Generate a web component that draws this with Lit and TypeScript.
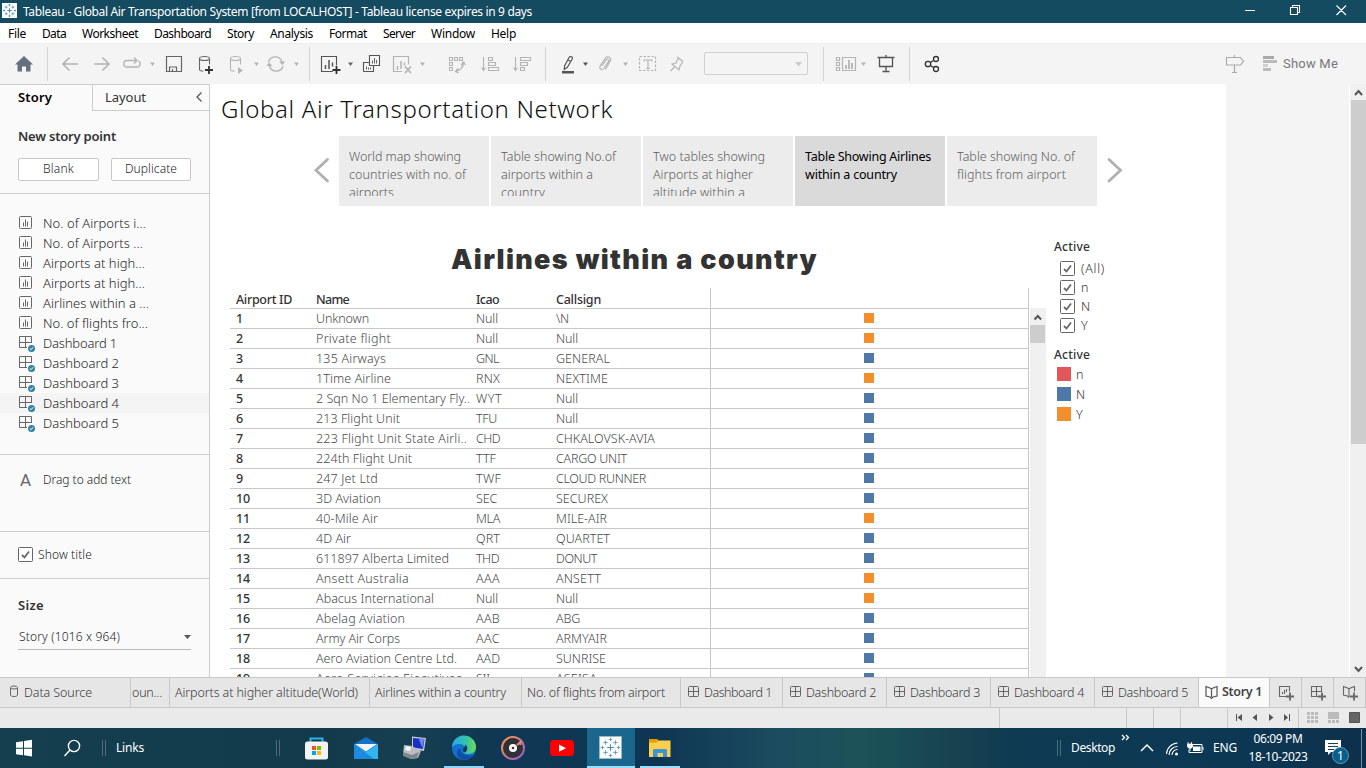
import { LitElement, html, svg, css, nothing } from "lit";
import { customElement } from "lit/decorators.js";

/** Text run that is tracked to a given advance width. */
const t = (text: string, w: number, cls = "") => html`<span class="t ${cls}" data-w=${w}>${text}</span>`;

/** Icon slot: a strip of a bar whose drawing uses the bar's own coordinates. */
const slot = (x: number, y: number, w: number, h: number, body: unknown) =>
  html`<svg class="slot" width=${w} height=${h} viewBox="${x} ${y} ${w} ${h}">${body}</svg>`;
const tool = (x: number, w: number, body: unknown) => slot(x, 43, w, 41, body);
const task = (x: number, w: number, body: unknown) => slot(x, 728, w, 40, body);
const caret = (x: number, fill = "#999", y = 62.5) => svg`<path d="M${x} ${y}h5l-2.5 3.5z" fill=${fill} />`;
const divider = (x: number) => svg`<path d="M${x + 0.5} 47v34" stroke="#d4d4d4" fill="none" />`;

const sparks = (cx: number, cy: number, s: number, c: string) => {
  const plus = (x: number, y: number, r: number, o = 0.75) => svg`<path d="M${cx + (x - r) * s} ${cy + y * s}h${2 * r * s}M${cx + x * s} ${cy + (y - r) * s}v${2 * r * s}" stroke=${c} stroke-opacity=${o} stroke-width=${Math.max(s * 0.85, 0.9)} fill="none" />`;
  return svg`${plus(0, 0, 2.8, 1)}${plus(0, -7, 1.5)}${plus(0, 7, 1.5)}${plus(-7, 0, 1.5)}${plus(7, 0, 1.5)}
    ${plus(-4.3, -4.3, 1.9)}${plus(4.3, -4.3, 1.9)}${plus(-4.3, 4.3, 1.9)}${plus(4.3, 4.3, 1.9)}`;
};

const menus: [string, number][] = [["File", 18], ["Data", 24], ["Worksheet", 56], ["Dashboard", 57], ["Story", 27], ["Analysis", 43], ["Format", 38], ["Server", 32], ["Window", 44], ["Help", 25]];
const sheets: [string, number][] = [["No. of Airports i...", 103], ["No. of Airports ...", 100], ["Airports at high...", 102], ["Airports at high...", 102], ["Airlines within a ...", 106], ["No. of flights fro...", 105]];
const cards: [string, number][][] = [
  [["World map showing", 112], ["countries with no. of", 117], ["airports", 45]],
  [["Table showing No.of", 115], ["airports within a", 92], ["country", 44]],
  [["Two tables showing", 112], ["Airports at higher", 100], ["altitude within a", 92]],
  [["Table Showing Airlines", 126], ["within a country", 92]],
  [["Table showing No. of", 118], ["flights from airport", 109]],
];
type Row = [string, number, string, number, string, number, string];
const rows: Row[] = [
  ["Unknown", 53, "Null", 22, "\\N", 13, "Y"],
  ["Private flight", 75, "Null", 22, "Null", 22, "Y"],
  ["135 Airways", 70, "GNL", 23, "GENERAL", 54, "N"],
  ["1Time Airline", 75, "RNX", 24, "NEXTIME", 52, "Y"],
  ["2 Sqn No 1 Elementary Fly..", 154, "WYT", 26, "Null", 22, "N"],
  ["213 Flight Unit", 84, "TFU", 21, "Null", 22, "N"],
  ["223 Flight Unit State Airli..", 151, "CHD", 24, "CHKALOVSK-AVIA", 99, "N"],
  ["224th Flight Unit", 96, "TTF", 20, "CARGO UNIT", 71, "N"],
  ["247 Jet Ltd", 62, "TWF", 25, "CLOUD RUNNER", 90, "N"],
  ["3D Aviation", 65, "SEC", 21, "SECUREX", 52, "N"],
  ["40-Mile Air", 62, "MLA", 24, "MILE-AIR", 51, "Y"],
  ["4D Air", 35, "QRT", 24, "QUARTET", 54, "N"],
  ["611897 Alberta Limited", 133, "THD", 23, "DONUT", 41, "N"],
  ["Ansett Australia", 93, "AAA", 24, "ANSETT", 45, "Y"],
  ["Abacus International", 118, "Null", 22, "Null", 22, "Y"],
  ["Abelag Aviation", 89, "AAB", 24, "ABG", 24, "N"],
  ["Army Air Corps", 84, "AAC", 24, "ARMYAIR", 51, "N"],
  ["Aero Aviation Centre Ltd.", 141, "AAD", 24, "SUNRISE", 50, "N"],
  ["Aero Servicios Ejecutivos..", 153, "SII", 14, "ASEISA", 41, "N"],
];

const sheetIcon = html`<svg width="18" height="18" viewBox="0 0 18 18" fill="none" stroke="#666"><rect x="1.500" y="2.500" width="12" height="12" rx="1" /><path d="M5.500 8.500v4M7.500 5.500v7M9.500 7.500v5" /></svg>`;
const dashIcon = html`<svg width="18" height="18" viewBox="0 0 18 18" fill="none" stroke="#666"><path d="M13.500 9V2.500H1.500V13.500H9M1.500 8.500H13.500M7.500 2.500V13.500" /><circle cx="13.500" cy="14.500" r="3.500" fill="#37809f" stroke="none" /><path d="M11.800 14.500l1.300 1.200 2-2.400" stroke="#fff" /></svg>`;
const check = html`<svg class="check" width="15" height="15" viewBox="0 0 15 15" fill="none" stroke="#666"><rect x=".5" y=".5" width="14" height="14" rx="1" fill="#fff" /><path d="M4 8l2.500 2.500L11 4.500" stroke-width="1.800" /></svg>`;
const gridIcon = html`<svg class="tabico" width="12" height="12" viewBox="0 0 12 12" fill="none" stroke="#666"><rect x=".5" y=".5" width="10" height="10" rx="1" /><path d="M5.500 .5v10M.5 5.500h10" /></svg>`;

@customElement("app-root")
export class AppRoot extends LitElement {
  static styles = css`
    :host { display: block; width: 1366px; height: 768px; overflow: hidden; background: #f4f4f4; font: 12px "Noto Sans", sans-serif; color: #333; }
    * { box-sizing: border-box; }
    svg { display: block; flex: none; }
    .t { white-space: pre; display: inline-block; }
    .page { display: flex; flex-direction: column; height: 768px; }
    .bar { display: flex; flex: none; }
    .titlebar { height: 23px; background: #154b60; color: #fff; line-height: 24px; align-items: stretch; }
    .titlebar .name { flex: 1; font-size: 12px; padding-left: 1px; }
    .menu { height: 20px; background: #fff; color: #000; line-height: 21px; padding-left: 8px; gap: 16px; }
    .toolbar { height: 41px; background: #f4f4f4; border-top: 1px solid #eee; }
    .toolbar .slot { margin-top: -1px; }
    .showme { font-size: 13px; color: #777; line-height: 40px; font-family: Roboto, sans-serif; }
    .grow { flex: 1; }
    .work { height: 593px; }
    .side { width: 210px; background: #fafafa; border-right: 1px solid #ccc; border-top: 1px solid #ccc; flex: none; display: flex; flex-direction: column; color: #1e1e1e; font-weight: 300; }
    .sec { border-bottom: 1px solid #ccc; flex: none; }
    .tabs2 { display: flex; height: 26px; line-height: 25px; font-size: 13px; }
    .tabs2 .on { width: 92px; padding-left: 18px; font-weight: 600; color: #000; }
    .tabs2 .off { flex: 1; display: flex; border-left: 1px solid #ccc; border-bottom: 1px solid #ccc; padding-left: 12px; justify-content: space-between; color: #333; font-weight: 400; }
    .new { height: 83px; padding: 15px 0 0 18px; }
    .new h4, .size h4 { margin: 0; font-size: 13px; font-weight: 600; color: #333; line-height: 21px; height: 21px; }
    .btns { display: flex; gap: 12px; padding-top: 11px; }
    .btn { width: 81px; height: 23px; border: 1px solid #c8c8c8; border-radius: 2px; background: #fff; text-align: center; line-height: 20px; }
    .btn + .btn { width: 80px; }
    .list { height: 261px; padding-top: 19px; font-size: 13px; }
    .li { display: flex; height: 20px; padding-left: 18px; align-items: center; gap: 7px; line-height: 20px; }
    .li.hl { background: #f4f4f4; }
    .drag { height: 77px; padding: 14px 0 0 20px; display: flex; gap: 12px; line-height: 22px; }
    .drag .a { font: 17px/22px Roboto, sans-serif; color: #666; width: 11px; }
    .show { height: 47px; display: flex; align-items: center; padding: 0 0 1px 18px; gap: 5px; }
    .size { padding: 16px 0 0 18px; }
    .dd { width: 173px; height: 24px; margin-top: 10px; border-bottom: 1px solid #bbb; display: flex; justify-content: space-between; line-height: 22px; padding-left: 1px; }
    .canvas { width: 1016px; background: #fff; flex: none; overflow: hidden; display: flex; flex-direction: column; }
    .h1 { height: 52px; padding-left: 11px; font-size: 24px; font-weight: 300; line-height: 50px; color: #111; flex: none; }
    .nav { display: flex; height: 70px; padding-left: 103px; flex: none; gap: 2px; }
    .card { width: 150px; height: 70px; background: #ececec; padding: 12px 0 0 10px; color: #606060; font-weight: 300; }
    .card .in { height: 48px; overflow: hidden; font-size: 12.500px; line-height: 18px; }
    .card .in .t { display: block; width: max-content; }
    .card.on { background: #dadada; color: #000; font-weight: 400; }
    .below { display: flex; flex: 1; min-height: 0; padding-left: 20px; }
    .sheet { width: 816px; flex: none; display: flex; flex-direction: column; }
    .h2 { height: 82px; padding: 34px 0 0 221px; font: 900 27px/40px Inter, sans-serif; color: #333; flex: none; }
    .tbl { display: flex; }
    .grid { width: 799px; flex: none; border-right: 1px solid #c8c8c8; font-size: 12.500px; color: #484848; font-weight: 300; }
    .row { display: grid; grid-template-columns: 80px 160px 80px 160px 1fr; height: 20px; border-bottom: 1px solid #c8c8c8; line-height: 20px; padding-left: 6px; }
    .row .mark { display: flex; justify-content: center; align-items: center; border-left: 1px solid #c8c8c8; height: 20px; margin-left: -6px; padding: 0 1px 2px 0; }
    .row.head, .row .id { font-weight: 500; color: #333; }
    .row.head { height: 21px; line-height: 23px; }
    .row.head .mark { height: 21px; }
    .sq { width: 10px; height: 10px; background: #4e79a7; }
    .sq.Y { background: #f28e2b; }
    .sq.n { background: #e15759; }
    .vs { width: 16px; margin: 20px 0 0 1px; background: #f0f0f0; display: flex; flex-direction: column; }
    .thumb { background: #cdcdcd; width: 15px; }
    .legend { padding: 32px 0 0 8px; color: #333; font-weight: 300; }
    .legend h5 { margin: 0; font: 500 12px/18px "Noto Sans", sans-serif; color: #333; height: 18px; }
    .legend .c { display: flex; gap: 6px; padding-left: 6px; height: 19px; align-items: center; font-size: 12.500px; }
    .legend .cs { padding: 3px 0 11px; }
    .legend .k { display: flex; gap: 5px; padding-left: 3px; height: 20px; align-items: center; font-size: 12.500px; }
    .legend .sq { width: 14px; height: 14px; }
    .scroll { width: 17px; background: #f0f0f0; display: flex; flex-direction: column; align-items: center; border-left: 1px solid #fff; }
    .scroll .thumb { height: 344px; }
    .tabs { height: 31px; background: #e6e6e6; border-top: 1px solid #c8c8c8; border-bottom: 1px solid #c8c8c8; font-size: 12.500px; color: #3c3c3c; line-height: 29px; font-weight: 300; }
    .tab { display: flex; border-right: 1px solid #c8c8c8; flex: none; overflow: hidden; padding-left: 6px; }
    .tab.ds { width: 131px; padding-left: 0; } .tab.w2 { width: 39px; padding-left: 1px; } .tab.w3 { width: 200px; padding-left: 5px; } .tab.w4 { width: 152px; padding-left: 5px; } .tab.w5 { width: 159px; padding-left: 5px; }
    .tab.d { width: 104px; padding-left: 7px; gap: 4px; } .tab.d1 { width: 102px; } .tab.st { width: 71px; background: #fafafa; color: #444; font-weight: 600; padding: 0; line-height: 28px; }
    .tab.p { width: 32px; padding: 0; }
    .tabico { margin-top: 8px; }
    .status { height: 20px; background: #eaeaea; }
    .taskbar { height: 40px; color: #fff; line-height: 40px; background: linear-gradient(90deg, #143f4e 0, #123a4a 24%, #163f51 30%, #0e3853 36%, #0e3654 48%, #1c4c60 57%, #1c5358 63%, #17434f 70%, #0e3b52 74%, #0c3854 90%, #0d304b 100%); }
    .clock { display: flex; flex-direction: column; width: 64px; line-height: 18px; padding-top: 2px; align-items: center; }
  `;

  updated() {
    this.renderRoot.querySelectorAll<HTMLElement>("[data-w]").forEach((el) => {
      el.style.letterSpacing = "0px";
      const n = (el.textContent ?? "").length;
      const range = document.createRange();
      range.selectNodeContents(el);
      el.style.letterSpacing = `${(Number(el.dataset.w) - range.getBoundingClientRect().width) / n}px`;
    });
  }

  private toolbar() {
    const g = "#b4b4b4";
    const d = "#555";
    return html`<div class="bar toolbar">
      ${tool(0, 53, svg`<path d="M24 56l-9 8.500h2.500v7h4.500v-5h4v5h4.500v-7h2.500z" fill="#66707c" />${divider(47)}`)}
      ${tool(53, 107, svg`<g fill="none" stroke=${g} stroke-width="1.600"><path d="M78 64H63M69.500 57.500L63 64l6.500 6.500M94 64h15M102.500 57.500l6.500 6.500-6.500 6.500" /><path d="M132 60.500h-5a3.200 3.200 0 0 0 0 6.500h10a3.200 3.200 0 0 0 1.500-6M130 60.500h6M134 57.500l3 3-3 3" stroke-width="1.300" /></g>${caret(150, g)}`)}
      ${tool(160, 62, svg`<g fill="none" stroke="#666" stroke-width="1.200"><path d="M166.500 56.500h15v15h-15z" /><path d="M169.500 71v-4h7v4M172.500 71v-2" /></g><g fill="none" stroke="#666" stroke-width="1.100"><ellipse cx="204.500" cy="58.500" rx="5" ry="2" /><path d="M199.500 58.500v11c0 1 1.500 1.500 4 1.500M209.500 58.500v6" /></g><path d="M209 66v8M205 70h8" stroke="#333" stroke-width="1.800" />`)}
      ${tool(222, 94, svg`<g fill="none" stroke=${g} stroke-width="1.100"><ellipse cx="235.500" cy="58.500" rx="5" ry="2" /><path d="M230.500 58.500v11c0 1 1.500 1.500 4 1.500M240.500 58.500v6" /><path d="M268.500 62a7 7 0 0 1 13.500 0M283 66a7 7 0 0 1-13.500 0" stroke-width="1.400" /></g><path d="M238 67l5 3.500-5 3.500zM279 61.500h6l-2.500 3.500zM266.500 66h6l-3.500-3.500z" fill=${g} />${caret(254, g)}${caret(294, g)}${divider(309)}`)}
      ${tool(316, 120, svg`<g fill="none" stroke=${d} stroke-width="1.100"><path d="M333 71.500h-11.500v-15h15v9" /><path d="M325.500 65v4M329 60v9M332.500 62.500v4" stroke-width="1.500" /><path d="M363.500 71.500v-9h5.500M363.500 71.500h10v-5.500M369.500 55.500h10v10h-10z" /><path d="M366.500 66.500v3M368.500 67.500v2M370.500 67.500v2M372.500 60.500v3M374.500 58v5.500M376.500 60v3.500" stroke-width=".9" /></g><path d="M336.500 66v8M332.500 70h8" stroke="#333" stroke-width="1.800" /><g fill="none" stroke=${g} stroke-width="1.200"><path d="M402 71.500h-8.500v-15h15v8" /><path d="M397.500 66v4M401 61v8M404.500 62.500v3" stroke-width="1.500" /><path d="M405 66.500l6 6.500M411 66.500l-6 6.500" stroke-width="1.800" /></g>${caret(348, "#666")}${caret(420, g)}`)}
      ${tool(436, 112, svg`<g fill="none" stroke=${g} stroke-width="1.100"><path d="M449.500 57.500h3v3h-3zM454.500 57.500h3v3h-3zM459.500 57.500h3v3h-3zM449.500 62.500h3v3h-3zM449.500 67.500h3v3h-3z" /><path d="M463.500 62.500c0 5-3 7.500-8 9M461 65l2.500-3 2 3M458 68.500l-2.500 3 3 1.500" stroke-width="1.300" /><path d="M483.500 57v13M481.500 67.500l2 3 2-3M488.500 57.500h4v3h-4zM488.500 62.500h7v3h-7zM488.500 67.500h10v3h-10zM515.500 57v13M513.500 67.500l2 3 2-3M520.500 57.500h10v3h-10zM520.500 62.500h7v3h-7zM520.500 67.500h4v3h-4z" /></g>${divider(545)}`)}
      ${tool(548, 147, svg`<g fill="none" stroke=${d} stroke-width="1.200"><path d="M564.500 66l4.500-8.500q1-1.500 2.500-.7t.7 2.200L567.500 67l-3.200 2.500zM568 60l3.300 1.800" /></g><path d="M562 71h12v2.500h-12z" fill=${d} /><g fill="none" stroke=${g} stroke-width="1.200"><path d="M602 66l4.500-6.500a1.500 1.500 0 0 1 2.300 1.500l-5 7.500c-2 2.500-5 0-3.600-2.600l5.500-8c2-2.500 6 0 4.600 3l-5 8.500" /><rect x="639.500" y="56.500" width="16" height="14" stroke-dasharray="2.500 1.500" /><path d="M644 61.500v-1.500h8v1.500M648 60v8.500M646 68.500h4" /><path d="M677 57l6 4.500M678.500 58l-2.500 5-4 1 7 6 1-4 3-4.500M674.500 67l-4 4" /></g>${caret(583, "#555")}${caret(623, g)}`)}
      ${tool(695, 131, svg`<rect x="704.500" y="52.500" width="103" height="22" rx="1.500" fill="#f4f4f4" stroke="#d0d0d0" /><path d="M795 62h7l-3.500 4.500z" fill="#ccc" />${divider(823)}`)}
      ${tool(826, 84, svg`<g fill="none" stroke=${g} stroke-width="1.200"><path d="M836.500 57.500h3v3h-3zM836.500 62.500h3v3h-3zM836.500 67.500h3v3h-3zM842.500 57.500h13v13h-13z" /><path d="M846 65v4M849 60v9M852 63v6" stroke-width="1.800" /></g><g fill="none" stroke="#555" stroke-width="1.300"><path d="M877.500 57.500h17M879.500 58v8.500h13V58M886 55v2M886 67v5M882.500 71.500h7" /></g>${caret(861, g)}${divider(909)}`)}
      ${tool(910, 310, svg`<g fill="none" stroke="#333" stroke-width="1.300"><circle cx="928" cy="64" r="2.700" /><circle cx="936" cy="59" r="2.500" /><circle cx="936" cy="69" r="2.500" /><path d="M930.500 62.500l3-2M930.500 65.500l3 2" /></g>`)}
      ${tool(1220, 63, svg`<g fill="none" stroke="#aaa" stroke-width="1.200"><path d="M1226.500 57.500h14l3 3.700-3 3.800h-14zM1234.500 55v2M1234.500 65v7.500M1232 72.500h5" /></g><path d="M1263 56h11v3h-11z" fill="#aaa" /><path d="M1263 60h14v3h-14zM1263 68h8v3h-8z" fill="#bbb" /><path d="M1263 64h5v3h-5z" fill="#d0d0d0" />`)}
      <div class="showme">${t("Show Me", 55)}</div>
    </div>`;
  }

  private side() {
    return html`<div class="side">
      <div class="tabs2"><div class="on">${t("Story", 34)}</div><div class="off">${t("Layout", 41)}<svg width="18" height="25" viewBox="190 85 18 25"><path d="M200.500 92.500l-4.500 4.500 4.500 4.500" fill="none" stroke="#555" stroke-width="1.300" /></svg></div></div>
      <div class="sec new"><h4>${t("New story point", 98)}</h4><div class="btns"><div class="btn">${t("Blank", 31)}</div><div class="btn">${t("Duplicate", 52)}</div></div></div>
      <div class="sec list">
        ${sheets.map(([s, w]) => html`<div class="li">${sheetIcon}${t(s, w)}</div>`)}
        ${[1, 2, 3, 4, 5].map((n) => html`<div class="li ${n === 4 ? "hl" : ""}">${dashIcon}${t(`Dashboard ${n}`, n === 1 ? 74 : 76)}</div>`)}
      </div>
      <div class="sec drag"><span class="a">A</span>${t("Drag to add text", 88)}</div>
      <div class="sec show">${check}${t("Show title", 54)}</div>
      <div class="size"><h4>${t("Size", 26)}</h4><div class="dd">${t("Story (1016 x 964)", 101)}<svg width="9" height="22" viewBox="0 0 9 22"><path d="M2 9h7l-3.500 4z" fill="#555" /></svg></div></div>
    </div>`;
  }

  private canvas() {
    return html`<div class="canvas">
      <div class="h1">${t("Global Air Transportation Network", 392)}</div>
      <div class="nav">
        <svg width="24" height="70" viewBox="313 136 24 70"><path d="M327.500 159.500l-11.500 10.800 11.500 10.700" fill="none" stroke="#b0b0b0" stroke-width="2.800" stroke-linecap="round" /></svg>
        ${cards.map((c, i) => html`<div class="card ${i === 3 ? "on" : ""}"><div class="in">${c.map(([s, w]) => t(s, w))}</div></div>`)}
        <svg width="30" height="70" viewBox="1099 136 30 70"><path d="M1109 159.500l11.500 10.800-11.500 10.700" fill="none" stroke="#b0b0b0" stroke-width="2.800" stroke-linecap="round" /></svg>
      </div>
      <div class="below">
        <div class="sheet">
          <div class="h2">${t("Airlines within a country", 367)}</div>
          <div class="tbl">
            <div class="grid">
              <div class="row head"><span>${t("Airport ID", 56)}</span><span>${t("Name", 33)}</span><span>${t("Icao", 23)}</span><span>${t("Callsign", 45)}</span><div class="mark"></div></div>
              ${rows.map((r, i) => html`<div class="row"><span class="id">${t(String(i + 1), i < 9 ? 7 : 14)}</span><span>${t(r[0], r[1])}</span><span>${t(r[2], r[3])}</span><span>${t(r[4], r[5])}</span><div class="mark"><div class="sq ${r[6]}"></div></div></div>`)}
            </div>
            <div class="vs"><svg width="16" height="17" viewBox="0 0 16 17"><path d="M4.500 11.500l3.300-3.500 3.300 3.500" fill="none" stroke="#555" stroke-width="2" /></svg><div class="thumb"><svg width="15" height="18"></svg></div></div>
          </div>
        </div>
        <div class="legend">
          <h5>${t("Active", 36)}</h5>
          <div class="cs">${([["(All)", 24], ["n", 7], ["N", 9], ["Y", 8]] as [string, number][]).map(([s, w]) => html`<div class="c">${check}${t(s, w)}</div>`)}</div>
          <h5>${t("Active", 36)}</h5>
          ${["n", "N", "Y"].map((s) => html`<div class="k"><div class="sq ${s}"></div>${t(s, 8)}</div>`)}
        </div>
      </div>
    </div>`;
  }

  private tabs() {
    const plus = (x: number) => svg`<path d="M${x} 692.500v8M${x - 4} 696.500h8" stroke="#666" stroke-width="1.800" />`;
    const book = (x: number) => svg`<path d="M${x} 686.500l4 1.500 1.500 1 1.500-1 4-1.500v9.500l-4 1-1.500 1.500-1.500-1.500-4-1zM${x + 5.5} 689v8" />`;
    const add = (x: number, body: unknown) => html`<div class="tab p">${slot(x, 678, 31, 29, svg`<g fill="none" stroke="#666" stroke-width="1.100">${body}</g>${plus(x + 20)}`)}</div>`;
    return html`<div class="bar tabs">
      <div class="tab ds">${slot(0, 678, 24, 29, svg`<g fill="none" stroke="#666"><ellipse cx="14" cy="687.500" rx="3.500" ry="1.500" /><path d="M10.500 687.500v7.500c0 2 7 2 7 0v-7.500" /></g>`)}${t("Data Source", 68)}</div>
      <div class="tab w2">${t("oun...", 30)}</div>
      <div class="tab w3">${t("Airports at higher altitude(World)", 183)}</div>
      <div class="tab w4">${t("Airlines within a country", 131)}</div>
      <div class="tab w5">${t("No. of flights from airport", 138)}</div>
      ${[1, 2, 3, 4, 5].map((n) => html`<div class="tab d ${n === 1 ? "d1" : ""}">${gridIcon}${t(`Dashboard ${n}`, n === 1 ? 68 : 70)}</div>`)}
      <div class="tab st">${slot(1199, 678, 23, 29, svg`<g fill="none" stroke="#555" stroke-width="1.200">${book(1206)}</g>`)}${t("Story 1", 40)}</div>
      ${add(1270, svg`<path d="M1286 696.500h-6.500v-10h10v5M1282.500 692v2M1284.500 690v4M1286.500 689v3" />`)}
      ${add(1302, svg`<path d="M1318 696.500h-6.500v-10h10v5.500M1311.500 691.500h10M1316.500 686.500v10" />`)}
      ${add(1334, svg`<path d="M1349 697.500l-1.500-1.500-4-1v-8.500l4 1.500 1.500 1 1.500-1 4-1.500v5M1349 689v8" />`)}
    </div>`;
  }

  private status() {
    return html`<div class="bar status"><div class="grow"></div>${slot(999, 708, 367, 20, svg`
      <path d="M999.500 708v20M1126.500 708v20M1153.500 708v20M1180.500 708v20M1227.500 708v20M1298.500 708v20" stroke="#c8c8c8" />
      <path d="M1236 714h1v7h-1zM1242 714v7l-4.500-3.500zM1257 714v7l-4.500-3.500zM1269 714v7l4.500-3.500zM1284 714v7l4-3.500zM1289 714h1v7h-1z" fill="#555" />
      ${[0, 1, 2].map((r) => [0, 1, 2].map((c) => svg`<rect x=${1307 + c * 4} y=${712 + r * 4} width="3" height="3" fill="#bbb" />`))}
      <path d="M1328 712h11v7h-11zM1328 720h3v3h-3zM1332 720h3v3h-3zM1336 720h3v3h-3z" fill="#bbb" />
      <path d="M1349.500 712.500h10v10h-10z" fill="#666" stroke="#555" />`)}</div>`;
  }

  private taskbar() {
    const bars = (x: number) => svg`<path d="M${x + 0.5} 740v16M${x + 3.5} 740v16" stroke="#fff" stroke-opacity=".25" />`;
    return html`<div class="bar taskbar">
      ${task(0, 116, svg`<path d="M16 742.200l7-1v6.500h-7zM24 741l8-1.200v7.900h-8zM16 748.700h7v6.500l-7-1zM24 748.700h8v7.700l-8-1.200z" fill="#fff" /><g fill="none" stroke="#fff" stroke-width="1.400"><circle cx="74" cy="746" r="5.600" /><path d="M70 750l-5.500 6" /></g>${bars(102)}`)}
      ${t("Links", 28)}
      ${task(144, 204, svg`${bars(276)}
        <path d="M310.500 742v-3.500h12v3.500" fill="none" stroke="#28b4f0" stroke-width="2" /><rect x="305" y="741.500" width="23" height="18" rx="2.500" fill="#f3f3f3" />
        <path d="M312 746h4v4h-4z" fill="#f25022" /><path d="M317 746h4v4h-4z" fill="#7fba00" /><path d="M312 751h4v4h-4z" fill="#00a4ef" /><path d="M317 751h4v4h-4z" fill="#ffb900" />`)}
      ${task(348, 92, svg`<path d="M354 744l12-7 12 7v12h-24z" fill="#1670c4" /><path d="M355 744h22l-11 7.500z" fill="#eef4fa" /><path d="M354 744l12 8 12-8v15h-24z" fill="#35b5ef" /><path d="M354 744l20 15h-20z" fill="#1b8be0" />
        <path d="M412 736.500l14 1.500-2 13-12-2z" fill="#c5ccd2" /><path d="M413 738l11.500 1-1.500 10-10-1.500z" fill="#1a2fc8" /><path d="M418.500 738.500l5.500.5-1.500 9z" fill="#6a86f5" /><path d="M404 745l8 1 9 5-3 7-7 1-8-4z" fill="#b9bdbf" /><path d="M403 752l9 3 7-3-2 6-6 1-8-3z" fill="#80878b" /><path d="M406 746l5 1-1 4-5-1z" fill="#f4f4f4" />`)}
      ${task(440, 147, svg`<defs><linearGradient id="e1" x1="0" x2="1"><stop stop-color="#2aa7ea" /><stop offset=".6" stop-color="#33c3a9" /><stop offset="1" stop-color="#75da50" /></linearGradient><linearGradient id="gr" x1="0" y1="0" x2="1" y2="1"><stop stop-color="#ff9a4a" /><stop offset="1" stop-color="#8a5bd0" /></linearGradient></defs>
        <circle cx="464" cy="748" r="12" fill="#1172cf" /><path d="M452 748a12 12 0 0 1 24-1c0 5-4 7-8 7-3 0-5-1-4-2 3-4 0-8-4-8-4 0-7 1-8 4z" fill="url(#e1)" /><path d="M460 748c0 5 5 9 14 7-3 4-8 5.500-12 4.500-7-3-6-9-2-11.500z" fill="#0f4fa6" /><path d="M463 748.500c1-1 2.500-2 2-4 3 2 3 6 0 8-2-1-2.500-2.500-2-4z" fill="#12395a" /><path d="M444 766h40v2h-40z" fill="#8fd3f5" />
        <circle cx="513" cy="748" r="11" fill="#303036" stroke="url(#gr)" stroke-width="2" /><circle cx="513" cy="748" r="4" fill="#fff" /><circle cx="513" cy="748" r="1.300" fill="#333" /><path d="M517 745l4-3.500M520.500 741v4" stroke="#e08a80" stroke-width="2" />
        <rect x="550" y="740" width="24" height="16" rx="3.500" fill="#f00" /><path d="M559 744.500l7 3.700-7 3.600z" fill="#fff" />`)}
      ${task(587, 98, svg`<path d="M587 728h48v40h-48z" fill="#1a668c" /><path d="M599.500 736.500h22v22h-22z" fill="#fafafa" stroke="#9bb" />${sparks(610.5, 747.5, 1.15, "#3f88b5")}<path d="M587 766h48v2h-48zM640 766h40v2h-40z" fill="#9edcfb" />
        <path d="M649 739h8l1 1.500h12.500v16.500H649z" fill="#ffcf4b" /><path d="M649 739h8l1.500 1.500-2 2H649z" fill="#e59c00" /><path d="M653 757v-6.500q0-1.500 1.500-1.500h11q1.500 0 1.500 1.500v6.500h-4v-4h-5.500v4z" fill="#3a94da" />`)}
      <div class="grow"></div>
      ${task(1040, 31, bars(1057))}
      ${t("Desktop", 44)}
      ${task(1115, 98, svg`<path d="M1122 735l2.500 2.500-2.500 2.500M1126 735l2.500 2.500-2.500 2.500" fill="none" stroke="#fff" stroke-width="1.300" /><path d="M1141 751l6-6 6 6" fill="none" stroke="#fff" stroke-width="1.500" />
        <g fill="none" stroke="#fff" stroke-width="1.100"><path d="M1166.500 754a11.500 11.500 0 0 1 11-11M1169 755a8.500 8.500 0 0 1 8.500-8.500M1172 755a5.500 5.500 0 0 1 5.500-5.500" /></g><circle cx="1176.500" cy="754" r="1.500" fill="#fff" />
        <path d="M1192.500 744.500h9.500v8h-13v-3" fill="none" stroke="#fff" /><path d="M1193 746.500h7.500v4.500h-7.500z" fill="#fff" /><path d="M1202.500 747h1v3h-1z" fill="#fff" /><path d="M1187.500 744h5v3q-2.500 3-5 0zM1188 742v2M1191.500 742v2M1190 748v3" stroke="#fff" stroke-width=".8" fill="#fff" />`)}
      ${t("ENG", 24)}
      ${task(1237, 9, nothing)}
      <div class="clock">${t("06:09 PM", 49)}${t("18-10-2023", 59)}</div>
      ${task(1310, 56, svg`<path d="M1325 740h16v12h-10l-3 3v-3h-3z" fill="#fff" /><path d="M1328 743.500h10M1328 746.500h10M1328 749.500h6" stroke="#123f57" /><circle cx="1340.500" cy="755.500" r="8" fill="#075f8b" stroke="#6b98ad" /><text x="1340.500" y="760" font-size="12" font-family="Noto Sans" fill="#fff" text-anchor="middle">1</text><path d="M1361.500 729v39" stroke="#fff" stroke-opacity=".45" />`)}
    </div>`;
  }

  render() {
    return html`<div class="page">
      <div class="bar titlebar">${slot(0, 0, 22, 23, svg`<path d="M2 3h15v15H2z" fill="#fff" />${sparks(9.5, 10.5, 0.78, "#3a80aa")}`)}
        <div class="name">${t("Tableau - Global Air Transportation System [from LOCALHOST] - Tableau license expires in 9 days", 509)}</div>
        ${slot(1230, 0, 136, 23, svg`<path d="M1245 10.500h10M1290.500 7.500h7v7h-7zM1292.500 7v-1.500h7v7h-1.500M1336.500 5.500l9.500 9.500M1346 5.500l-9.500 9.500" fill="none" stroke="#fff" stroke-width="1.100" />`)}</div>
      <div class="bar menu">${menus.map(([s, w]) => t(s, w))}</div>
      ${this.toolbar()}
      <div class="bar work">
        ${this.side()}${this.canvas()}
        <div class="grow"></div>
        <div class="scroll"><svg width="15" height="16" viewBox="0 0 15 16"><path d="M4 11l3.500-4L11 11" fill="none" stroke="#555" stroke-width="2" /></svg><div class="thumb"></div><div class="grow"></div><svg width="15" height="17" viewBox="0 0 15 17"><path d="M4 7l3.500 4L11 7" fill="none" stroke="#555" stroke-width="2" /></svg></div>
      </div>
      ${this.tabs()}${this.status()}${this.taskbar()}
    </div>`;
  }
}
